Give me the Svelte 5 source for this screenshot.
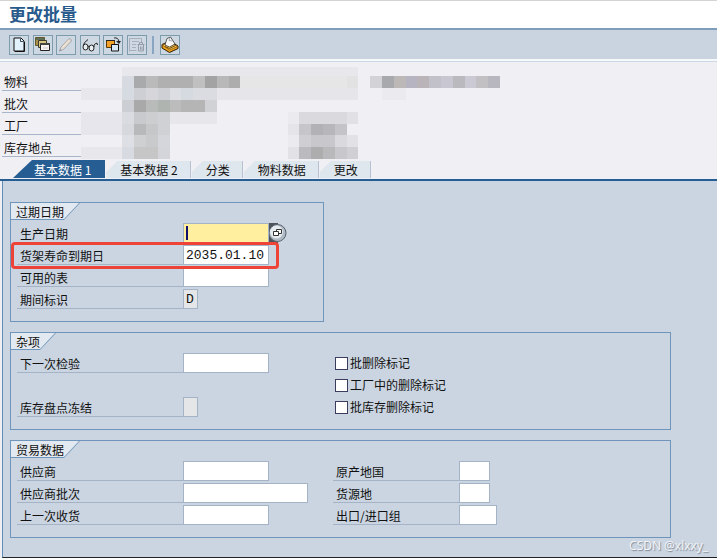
<script lang="ts">
	interface Cell {
		x: number;
		y: number;
		w: number;
		fill: string;
	}

	const tabs = ['基本数据 1', '基本数据 2', '分类', '物料数据', '更改'];
	const keys = ['物料', '批次', '工厂', '库存地点'];
	const flags = ['批删除标记', '工厂中的删除标记', '批库存删除标记'];

	let active = $state(0);
	let expiry = $state('2035.01.10');
	let period = $state('D');

	// masked values: [first column, column span, colour] per run, one list per row
	const maskRows: [number, number, string][][] = [
		[[0, 20, 'e8e7ec']],
		[
			[0, 1, 'd8dae2'], [1, 1, 'a9aaac'], [2, 1, 'bababa'], [3, 3, 'b0b0b0'], [6, 1, 'c0c0c0'],
			[7, 1, 'a3a3a3'], [8, 1, 'b8b8b8'], [9, 1, 'adadad'], [10, 9, 'e6e6e6'], [19, 1, 'e2e2e3'],
			[21, 1, 'd3d2d7'], [22, 1, 'a8a9ad'], [23, 1, 'bdb8b8'], [24, 1, 'b5b4c0'], [25, 1, 'bab3b7'],
			[26, 1, 'c2c1ca'], [27, 1, 'c8c6d0'], [28, 1, 'bab9be'], [29, 1, 'cbc9d3'], [30, 1, 'c3c0c4'],
			[31, 1, 'b8b6be']
		],
		[
			[-3.5, 3.5, 'e8e7ec'], [0, 1, 'd6dae1'], [1, 1, 'cdcfd4'], [2, 1, 'd5d5da'], [3, 1, 'cfd0d5'],
			[4, 1, 'dcdee3'], [5, 1, 'd5d9e0'], [6, 2, 'dadce1'], [8, 12, 'e6e5ea'], [22, 2, 'ebeaef']
		],
		[
			[0, 1, 'ccced4'], [1, 1, 'a9a9a9'], [2, 1, 'b9baba'], [3, 1, 'b0b4b0'], [4, 1, 'bcbcbc'],
			[5, 2, 'b4b5b4'], [7, 1, 'd0d2d5']
		],
		[
			[-3.5, 3.5, 'e7e6ec'], [0, 1, 'd9dbe0'], [1, 1, 'c9cacd'], [2, 1, 'cdced0'], [3, 1, 'd0d1d5'],
			[4, 4, 'e6e6eb'], [14, 1, 'ebeaef'], [15, 4, 'dad9de'], [19, 1, 'e1e0e5']
		],
		[
			[-3.5, 3.5, 'e7e6ec'], [0, 1, 'd6d8dd'], [1, 1, 'b8b9bb'], [2, 1, 'c5c7c9'], [3, 1, 'cfd1d4'],
			[14, 1, 'e5e4e9'], [15, 1, 'c6c5ca'], [16, 1, 'b2b2b6'], [17, 1, 'b7b6bb'], [18, 1, 'c4c3c8']
		],
		[
			[0, 1, 'dddfe4'], [1, 1, 'cfd0d2'], [2, 1, 'c9cacc'], [3, 1, 'd4d6db'], [14, 1, 'ebeaef'],
			[15, 1, 'cfced3'], [16, 2, 'c8c7cb'], [18, 1, 'dad9de'], [19, 1, 'e2e1e6']
		],
		[
			[-3.5, 3.5, 'e8e7ec'], [0, 1, 'd7dae1'], [1, 2, 'c6c6c6'], [3, 1, 'd4d5da'], [14, 1, 'e2e1e6'],
			[15, 1, 'bbbabe'], [16, 1, 'adadad'], [17, 1, 'b9b9bb'], [18, 1, 'c8c7cc'], [19, 1, 'd0cfd4']
		]
	];

	const mask: Cell[] = maskRows.flatMap((row, y) =>
		row.map(([x, w, c]) => ({ x, y, w, fill: '#' + c }))
	);
</script>

<div class="app">
	<header class="title">
		<h1>更改批量</h1>
	</header>

	<div class="toolbar">
		<div class="tools">
			<button class="tool" aria-label="创建">
				<svg viewBox="0 0 18 18">
					<path d="M4 2h7l3 3v10H4z" fill="#e2f1fb" stroke="#111" />
					<path d="M10.500 2.500v3h3" fill="#fff" stroke="#345" />
					<path d="M14.500 6v9.500H5" fill="none" stroke="#111" />
				</svg>
			</button>
			<button class="tool" aria-label="复制">
				<svg viewBox="0 0 18 18">
					<path d="M1.500 1.500h9v8h-9z" fill="#a98f4a" stroke="#62592f" />
					<path d="M2 2h8v2H2z" fill="#5e6d56" />
					<path d="M4.500 4.500h8v7h-8z" fill="#d9c680" stroke="#3d3a2c" />
					<path d="M6.500 7.500h9v7h-9z" fill="#f8f3f0" stroke="#222" />
					<path d="M6 7h10v2H6z" fill="#444" />
					<path d="M9 11h5v2H9z" fill="#e2dde0" />
				</svg>
			</button>
			<button class="tool" aria-label="更改" disabled>
				<svg viewBox="0 0 18 18">
					<path d="M2.500 15l1.500-4 8-8.500q2.500 0 2.500 2.500L6.500 13.500z" fill="#dedbd6" stroke="#aaa9af" />
					<path d="M5.500 11.500l6.500-7" stroke="#f0e2cc" stroke-width="1.500" />
					<path d="M2 15.500l2.500-1-1-1.500z" fill="#8f929b" />
				</svg>
			</button>
			<button class="tool" aria-label="显示">
				<svg viewBox="0 0 18 18" fill="none" stroke="#222">
					<ellipse cx="4.500" cy="11" rx="2.500" ry="3" fill="#e8edf2" />
					<ellipse cx="10.500" cy="12" rx="2.500" ry="3" fill="#e8edf2" />
					<path d="M7 10.500q1-1 1.500 .5M2.500 9.500q-.5-2.500 4.500-6M13 11q-.5-2 1.500-3.500t2 1.500" />
				</svg>
			</button>
			<button class="tool" aria-label="替换">
				<svg viewBox="0 0 18 18">
					<path d="M2.500 4.500h8v7h-8z" fill="#f3a128" stroke="#5b3b0c" />
					<path d="M2 4h9v1H2z" fill="#222" />
					<path d="M7.500 8.500h7v6.500h-7z" fill="#d7e9f7" stroke="#111" />
					<path d="M10 2q4-1 5 3.500" fill="none" stroke="#222" />
					<path d="M12 5h5L15 8z" fill="#222" />
				</svg>
			</button>
			<button class="tool" aria-label="删除" disabled>
				<svg viewBox="0 0 18 18" fill="none" stroke="#a7afbd">
					<path d="M1.500 15.500V2.500h12v4M1.500 14.500h7" />
					<path d="M4 5.500h7M4 8.500h4M4 11.500h4" />
					<path d="M9.500 8.500h7M11.500 8v-1.500h3V8M10.500 9v6h5V9M12.500 10.500v3.500M14 10.500v3.500" stroke="#969eac" />
				</svg>
			</button>
		</div>
		<span class="sep"></span>
		<button class="tool" aria-label="分类">
			<svg viewBox="0 0 18 18">
				<path d="M1 8.500L9 5l8 5v2.500l-8.500 4L1 12z" fill="#efa41c" stroke="#2b1d05" />
				<path d="M1.500 9L9 6l7.500 4.500L8.500 14z" fill="#ffd15b" stroke="#75480a" stroke-width=".7" />
				<path d="M4 9l2-6.500 3.500-1.500 4.500 7-5.500 3z" fill="#fbfbfb" stroke="#333" stroke-width=".8" />
				<path d="M9 1.500l-1 3 3 .5" fill="none" stroke="#8a96a5" stroke-width=".8" />
				<path d="M4 10.500l4.500 2 6-3" stroke="#704708" fill="none" />
			</svg>
		</button>
	</div>

	<section class="head">
		<dl class="keys">
			{#each keys as key}
				<dt>{key}</dt>
			{/each}
		</dl>
		<svg class="mask" viewBox="-3.5 0.2 35.5 7.8" preserveAspectRatio="none" shape-rendering="crispEdges" aria-hidden="true">
			{#each mask as cell}
				<rect x={cell.x} y={cell.y} width={cell.w} height="1" fill={cell.fill} />
			{/each}
		</svg>
	</section>

	<div class="tabs" role="tablist">
		{#each tabs as tab, i}
			<button class="tab" class:active={active === i} role="tab" aria-selected={active === i} onclick={() => (active = i)}>{tab}</button>
		{/each}
	</div>

	<main class="panel">
		<fieldset class="group short">
			<legend>过期日期</legend>
			<div class="rows">
				<div class="row">
					<label for="made">生产日期</label>
					<div class="field">
						<input id="made" class="date current" />
						<span class="caret"></span>
					</div>
					<button class="help" aria-label="选择日期">
						<svg viewBox="0 0 18 20">
							<path d="M0 0h9v20H0z" fill="#4d5358" />
							<circle cx="8.500" cy="10" r="8.500" fill="#b0bac4" stroke="#59636d" />
							<circle cx="7.500" cy="9" r="6.500" fill="#e6ebf0" />
							<path d="M7.500 6.500h5v4h-5z" fill="#fff" stroke="#333" />
							<path d="M4.500 8.500h5v4h-5z" fill="#fff" stroke="#333" />
						</svg>
					</button>
				</div>
				<div class="row marked">
					<label for="expiry">货架寿命到期日</label>
					<input id="expiry" class="date" bind:value={expiry} />
				</div>
				<div class="row">
					<label for="usable">可用的表</label>
					<input id="usable" class="date" />
				</div>
				<div class="row">
					<label for="period">期间标识</label>
					<input id="period" class="char" bind:value={period} readonly />
				</div>
			</div>
		</fieldset>

		<fieldset class="group">
			<legend>杂项</legend>
			<div class="cols">
				<div class="rows">
					<div class="row">
						<label for="next">下一次检验</label>
						<input id="next" class="date" />
					</div>
					<div class="row"></div>
					<div class="row">
						<label for="frozen">库存盘点冻结</label>
						<input id="frozen" class="char" readonly />
					</div>
				</div>
				<div class="rows">
					{#each flags as flag}
						<label class="check"><input type="checkbox" />{flag}</label>
					{/each}
				</div>
			</div>
		</fieldset>

		<fieldset class="group">
			<legend>贸易数据</legend>
			<div class="cols">
				<div class="rows">
					<div class="row">
						<label for="vendor">供应商</label>
						<input id="vendor" class="date" />
					</div>
					<div class="row">
						<label for="vbatch">供应商批次</label>
						<input id="vbatch" class="long" />
					</div>
					<div class="row">
						<label for="last">上一次收货</label>
						<input id="last" class="date" />
					</div>
				</div>
				<div class="rows narrow">
					<div class="row">
						<label for="country">原产地国</label>
						<input id="country" class="code" />
					</div>
					<div class="row">
						<label for="region">货源地</label>
						<input id="region" class="code" />
					</div>
					<div class="row">
						<label for="trade">出口/进口组</label>
						<input id="trade" class="code4" />
					</div>
				</div>
			</div>
		</fieldset>

		<span class="credit">CSDN @xlxxy_</span>
	</main>
</div>

<style>
	:global(body) {
		margin: 0;
		background: #f0eff4;
	}

	.app {
		font-family: 'Noto Sans CJK SC', sans-serif;
		font-size: 12px;
		color: #111;
	}

	.app * { box-sizing: border-box; }

	button, input { font: inherit; color: inherit; }

	.title {
		height: 30px;
		padding-left: 9px;
		background: #fff;
		border-top: 1px solid #d4d4d4;
		border-bottom: 2px solid #7d9dba;
	}

	h1 {
		margin: 0;
		font-size: 17px;
		line-height: 26px;
		color: #285a8c;
	}

	.toolbar {
		display: flex;
		align-items: center;
		height: 31px;
		padding: 0 9px;
		background: #c9d4e0;
		border-bottom: 2px solid #f6f8fb;
	}

	.tools {
		display: flex;
		justify-content: space-between;
		width: 138px;
	}

	.tool {
		width: 20px;
		height: 20px;
		padding: 0;
		background: #ced8e2;
		border: 1px solid #7d9cab;
	}
	.tool svg { display: block; width: 18px; height: 18px; }

	.sep {
		width: 2px;
		height: 18px;
		margin: 0 6px 0 5px;
		background: #8aa5c2;
	}

	.head {
		display: flex;
		height: 99px;
		padding: 5px 0 0 2px;
		border-top: 1px solid #cdd8e6;
	}

	.keys {
		width: 79px;
		margin: 0;
		padding-top: 2px;
	}

	dt {
		height: 22px;
		padding: 2px 0 0 2px;
		line-height: 21px;
		border-bottom: 1px solid #a9b5c9;
	}

	.mask {
		flex: none;
		width: 419px;
		height: 92px;
	}

	.tabs {
		display: flex;
		padding: 0 0 1px 13px;
		border-bottom: 2px solid #265d93;
	}

	.tab {
		height: 18px;
		padding: 0 12px 0 15px;
		line-height: 20px;
		background: #dfe7ee;
		border: 0;
		border-right: 1px solid #a8b5c9;
		clip-path: polygon(1px 12px, 12px 1px, 100% 1px, 100% 100%, 1px 100%);
	}
	.tab.active {
		padding-left: 21px;
		padding-right: 13px;
		color: #fff;
		background: #265d93;
		border-color: #265d93;
		clip-path: polygon(0 100%, 19px 0, 100% 0, 100% 100%);
	}

	.panel {
		position: relative;
		display: flex;
		flex-direction: column;
		gap: 10px;
		margin-left: 2px;
		padding: 21px 46px 19px 7px;
		background: #cbd5e1;
		border-left: 1px solid #5f8bb5;
		border-bottom: 1px solid #222;
	}

	.group {
		min-width: 0;
		margin: 0;
		padding: 0 6px 12px;
		border: 1px solid #6f95bb;
	}
	.group.short { width: 314px; }

	legend {
		position: relative;
		float: left;
		height: 17px;
		margin-left: -6px;
		padding: 0 16px 0 5px;
		line-height: 17px;
		background: #6f95bb;
		clip-path: polygon(0 0, 100% 0, calc(100% - 16px) 100%, 0 100%);
		z-index: 0;
	}
	legend::before {
		content: '';
		position: absolute;
		inset: 0 1px 1px 0;
		z-index: -1;
		background: #e3e9f0;
		clip-path: polygon(0 0, 100% 0, calc(100% - 15px) 100%, 0 100%);
	}

	.cols {
		display: grid;
		grid-template-columns: 316px 1fr;
		clear: both;
	}

	.rows {
		display: grid;
		gap: 2px;
		clear: both;
	}

	legend + div { padding-top: 3px; }

	.row {
		display: flex;
		height: 20px;
	}

	.row label {
		width: 166px;
		padding-left: 3px;
		line-height: 22px;
		border-bottom: 1px solid #a5b3c7;
	}
	.narrow .row label { width: 126px; }

	.row input {
		height: 20px;
		padding: 0 2px;
		font-family: 'Liberation Mono', monospace;
		font-size: 13px;
		background: #fff;
		border: 1px solid #a5b3c7;
		border-radius: 0;
		outline: 0;
	}
	.row input[readonly] { background: #e5e6e7; }
	.row input.current { background: #ffef9f; }

	.date { width: 86px; }
	.char { width: 15px; }
	.long { width: 125px; }
	.code { width: 31px; }
	.code4 { width: 38px; }

	.field { position: relative; display: flex; }

	.caret {
		position: absolute;
		left: 3px;
		top: 3px;
		width: 2px;
		height: 14px;
		background: #10106a;
	}

	.help {
		width: 18px;
		height: 20px;
		padding: 0;
		background: none;
		border: 0;
	}
	.help svg { display: block; }

	.marked {
		position: relative;
		width: 252px;
	}
	.marked::after {
		content: '';
		position: absolute;
		inset: -3px -10px -4px -6px;
		border: 3px solid #ee4438;
		border-radius: 4px;
		pointer-events: none;
	}

	.check {
		display: flex;
		align-items: center;
		gap: 2px;
		height: 20px;
		padding-left: 2px;
		line-height: 20px;
	}
	.check input {
		appearance: none;
		width: 13px;
		height: 13px;
		margin: 0;
		background: #fff;
		border: 1px solid #3c3c5c;
	}

	.credit {
		position: absolute;
		right: 9px;
		bottom: 3px;
		font-family: 'Open Sans', sans-serif;
		font-size: 12px;
		line-height: 16px;
		color: #f4f6f8;
		text-shadow: 1px 1px 1px #7d8794;
	}
</style>
